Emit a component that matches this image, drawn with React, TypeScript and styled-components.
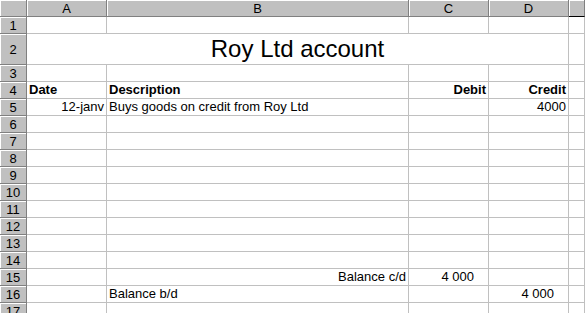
import React from 'react';
import styled, { createGlobalStyle } from 'styled-components';

const GlobalStyle = createGlobalStyle`
  html, body {
    margin: 0;
    padding: 0;
    background: #ffffff;
    overflow: hidden;
  }
  body {
    font-family: "Liberation Sans", Arial, sans-serif;
    font-size: 13px;
    color: #000000;
  }
`;

const Sheet = styled.div`
  display: grid;
  grid-template-columns: 27px 80px 302px 80px 80px 1fr;
  grid-template-rows: 17px 17px 31px repeat(15, 17px);
  width: 585px;
  height: 313px;
  overflow: hidden;
  background: #ffffff;
`;

const HeadCell = styled.div<{ $dark?: boolean }>`
  box-sizing: border-box;
  display: flex;
  align-items: center;
  justify-content: center;
  background: #c0c0c0;
  border-right: 1px solid #808080;
  border-bottom: 1px solid ${(p) => (p.$dark ? '#000000' : '#808080')};
  box-shadow: inset 1px 1px 0 #ffffff;
  font-size: 13px;
  line-height: 13px;
  padding-top: 1px;
`;

const Cell = styled.div<{
  $align?: 'left' | 'right' | 'center';
  $bold?: boolean;
  $span?: number;
  $padRight?: number;
}>`
  box-sizing: border-box;
  display: flex;
  align-items: flex-end;
  justify-content: ${(p) =>
    p.$align === 'right' ? 'flex-end' : p.$align === 'center' ? 'center' : 'flex-start'};
  grid-column: ${(p) => (p.$span ? `span ${p.$span}` : 'auto')};
  border-right: 1px solid #c0c0c0;
  border-bottom: 1px solid #c0c0c0;
  padding: 0 ${(p) => p.$padRight ?? 2}px 1px 2px;
  font-weight: ${(p) => (p.$bold ? 700 : 400)};
  white-space: nowrap;
  overflow: visible;
  line-height: 15px;
`;

const Title = styled(Cell)`
  align-items: center;
  font-size: 24px;
  line-height: 28px;
  padding-bottom: 0;
`;

type CellData = {
  text?: string;
  align?: 'left' | 'right' | 'center';
  bold?: boolean;
  padRight?: number;
};

const columns = ['A', 'B', 'C', 'D'];

const rows: Record<number, CellData[]> = {
  4: [
    { text: 'Date', bold: true },
    { text: 'Description', bold: true },
    { text: 'Debit', bold: true, align: 'right' },
    { text: 'Credit', bold: true, align: 'right' },
  ],
  5: [
    { text: '12-janv', align: 'right' },
    { text: 'Buys goods on credit from Roy Ltd' },
    {},
    { text: '4000', align: 'right' },
  ],
  15: [
    {},
    { text: 'Balance c/d', align: 'right' },
    { text: '4 000', align: 'right', padRight: 14 },
    {},
  ],
  16: [
    {},
    { text: 'Balance b/d' },
    {},
    { text: '4 000', align: 'right', padRight: 14 },
  ],
};

const App = () => {
  const body: React.ReactNode[] = [];
  for (let r = 1; r <= 17; r++) {
    body.push(<HeadCell key={`h${r}`}>{r}</HeadCell>);
    if (r === 2) {
      body.push(
        <Title key="title" $span={4} $align="center">
          Roy Ltd account
        </Title>,
      );
    } else {
      const data = rows[r] ?? [{}, {}, {}, {}];
      data.forEach((c, i) => {
        body.push(
          <Cell key={`${r}-${i}`} $align={c.align} $bold={c.bold} $padRight={c.padRight}>
            {c.text}
          </Cell>,
        );
      });
    }
    body.push(<Cell key={`${r}-e`} />);
  }

  return (
    <>
      <GlobalStyle />
      <Sheet>
        <HeadCell />
        {columns.map((c) => (
          <HeadCell key={c}>{c}</HeadCell>
        ))}
        <HeadCell $dark />
        {body}
      </Sheet>
    </>
  );
};

export default App;
